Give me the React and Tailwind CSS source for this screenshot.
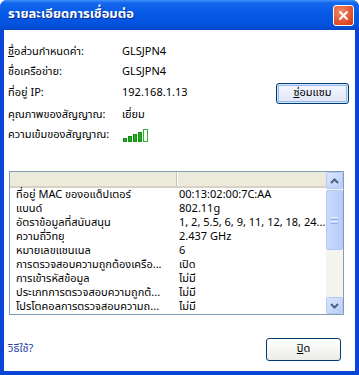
import React from 'react';

const rows = [
    ['ที่อยู่ MAC ของอแด็ปเตอร์', '00:13:02:00:7C:AA'],
    ['แบนด์', '802.11g'],
    ['อัตราข้อมูลที่สนับสนุน', '1, 2, 5.5, 6, 9, 11, 12, 18, 24...'],
    ['ความถี่วิทยุ', '2.437 GHz'],
    ['หมายเลขแชนเนล', '6'],
    ['การตรวจสอบความถูกต้องเครือ...', 'เปิด'],
    ['การเข้ารหัสข้อมูล', 'ไม่มี'],
    ['ประเภทการตรวจสอบความถูกต้...', 'ไม่มี'],
    ['โปรโตคอลการตรวจสอบความถ...', 'ไม่มี'],
];

function Chevron({ up }) {
    return (
        <svg width="9" height="6" viewBox="0 0 9 6">
            <path
                d={up ? 'M1 5 L4.5 1.5 L8 5' : 'M1 1 L4.5 4.5 L8 1'}
                fill="none"
                stroke="#4d6185"
                strokeWidth="2"
            />
        </svg>
    );
}

function ScrollButton({ up }) {
    return (
        <div className="h-[17px] flex items-center justify-center rounded-[2px] border border-[#b4c8f6] bg-gradient-to-br from-[#dce6fd] to-[#b9cdf9]">
            <Chevron up={up} />
        </div>
    );
}

export default function App() {
    return (
        <div className="w-[359px] h-[375px] bg-white text-[11px] text-black font-[Tahoma,'Noto_Sans_Thai','Noto_Sans','DejaVu_Sans',sans-serif]">
            <div className="flex flex-col h-full rounded-t-[7px] overflow-hidden bg-[#0b45d8]">
                {/* Title bar */}
                <div className="h-[30px] shrink-0 flex items-center justify-between pl-[8px] pr-[5px] bg-[linear-gradient(to_bottom,#3f90f8_0%,#1367ec_10%,#0559e6_45%,#0452dc_85%,#0846c8_100%)]">
                    <span className="text-white font-bold text-[13px] [text-shadow:1px_1px_0_#0a2a8a]">
                        รายละเอียดการเชื่อมต่อ
                    </span>
                    <div className="w-[21px] h-[21px] rounded-[3px] border border-white flex items-center justify-center bg-[radial-gradient(circle_at_35%_30%,#f08a68,#dd4b25_70%,#c8391a)]">
                        <svg width="11" height="11" viewBox="0 0 11 11">
                            <path d="M1.5 1.5 L9.5 9.5 M9.5 1.5 L1.5 9.5" stroke="white" strokeWidth="2" />
                        </svg>
                    </div>
                </div>

                {/* Body */}
                <div className="flex-1 mx-[4px] mb-[4px] bg-white flex flex-col">
                    <div className="pt-[12px] pl-[4px] pr-[6px]">
                        <div className="h-[20px] flex items-center">
                            <span className="w-[114px]"><span className="underline">ชื่</span>อส่วนกำหนดค่า:</span>
                            <span>GLSJPN4</span>
                        </div>
                        <div className="h-[20px] flex items-center">
                            <span className="w-[114px]">ชื่อเครือข่าย:</span>
                            <span>GLSJPN4</span>
                        </div>
                        <div className="h-[23px] flex items-center">
                            <span className="w-[114px]">ที่อยู่ IP:</span>
                            <span className="flex-1">192.168.1.13</span>
                            <button className="w-[73px] h-[21px] rounded-[3px] border border-[#003c74] bg-gradient-to-b from-[#f4f7fe] to-[#dfe5f5] shadow-[inset_0_0_0_1px_#cee7ff,inset_0_0_0_2px_#98b8ea] text-[11px]">
                                <span className="underline">ซ่</span>อมแซม
                            </button>
                        </div>
                        <div className="h-[21px] flex items-center">
                            <span className="w-[114px]">คุณภาพของสัญญาณ:</span>
                            <span>เยี่ยม</span>
                        </div>
                        <div className="h-[19px] flex items-center">
                            <span className="w-[114px]">ความเข้มของสัญญาณ:</span>
                            <div className="flex items-end gap-[1px] h-[13px] pl-[1px]">
                                <div className="w-[4px] h-[4px] bg-[#1fae1f] border border-[#178c17]" />
                                <div className="w-[4px] h-[6px] bg-[#1fae1f] border border-[#178c17]" />
                                <div className="w-[4px] h-[8px] bg-[#1fae1f] border border-[#178c17]" />
                                <div className="w-[4px] h-[10px] bg-[#1fae1f] border border-[#178c17]" />
                                <div className="w-[5px] h-[13px] bg-white border border-[#2bb52b]" />
                            </div>
                        </div>
                    </div>

                    {/* List view */}
                    <div className="mt-[26px] ml-[5px] w-[335px] h-[144px] border border-[#7f9db9] flex">
                        <div className="flex-1 flex flex-col overflow-hidden">
                            <div className="h-[16px] shrink-0 flex bg-[#ebeadb] border-b-2 border-[#d6d3c2]">
                                <div className="w-[167px] border-r border-[#c7c5b2]" />
                                <div className="w-px bg-white" />
                            </div>
                            {rows.map(([k, v]) => (
                                <div key={k} className="h-[14px] shrink-0 flex leading-[14px] whitespace-nowrap">
                                    <span className="w-[167px] shrink-0 pl-[6px]">{k}</span>
                                    <span className="pl-[2px]">{v}</span>
                                </div>
                            ))}
                        </div>
                        <div className="w-[17px] shrink-0 flex flex-col bg-[#f5f4ef]">
                            <ScrollButton up />
                            <div className="mt-[1px] h-[60px] rounded-[2px] border border-[#b4c8f6] bg-gradient-to-r from-[#c9d9fc] to-[#b9cdf9] flex flex-col items-center justify-center gap-[1px]">
                                <div className="w-[7px] h-px bg-[#eef4fe]" />
                                <div className="w-[7px] h-px bg-[#8cb0f8]" />
                                <div className="w-[7px] h-px bg-[#eef4fe]" />
                                <div className="w-[7px] h-px bg-[#8cb0f8]" />
                            </div>
                            <div className="flex-1" />
                            <ScrollButton />
                        </div>
                    </div>

                    {/* Footer */}
                    <div className="mt-[23px] h-[23px] flex items-center justify-between pl-[4px] pr-[14px]">
                        <span className="text-[#1e3ca8]">วิธีใช้?</span>
                        <button className="w-[75px] h-[23px] rounded-[3px] border border-[#003c74] bg-gradient-to-b from-white to-[#ecebe6] text-[11px]">
                            <span className="underline">ปิ</span>ด
                        </button>
                    </div>
                </div>
            </div>
        </div>
    );
}
